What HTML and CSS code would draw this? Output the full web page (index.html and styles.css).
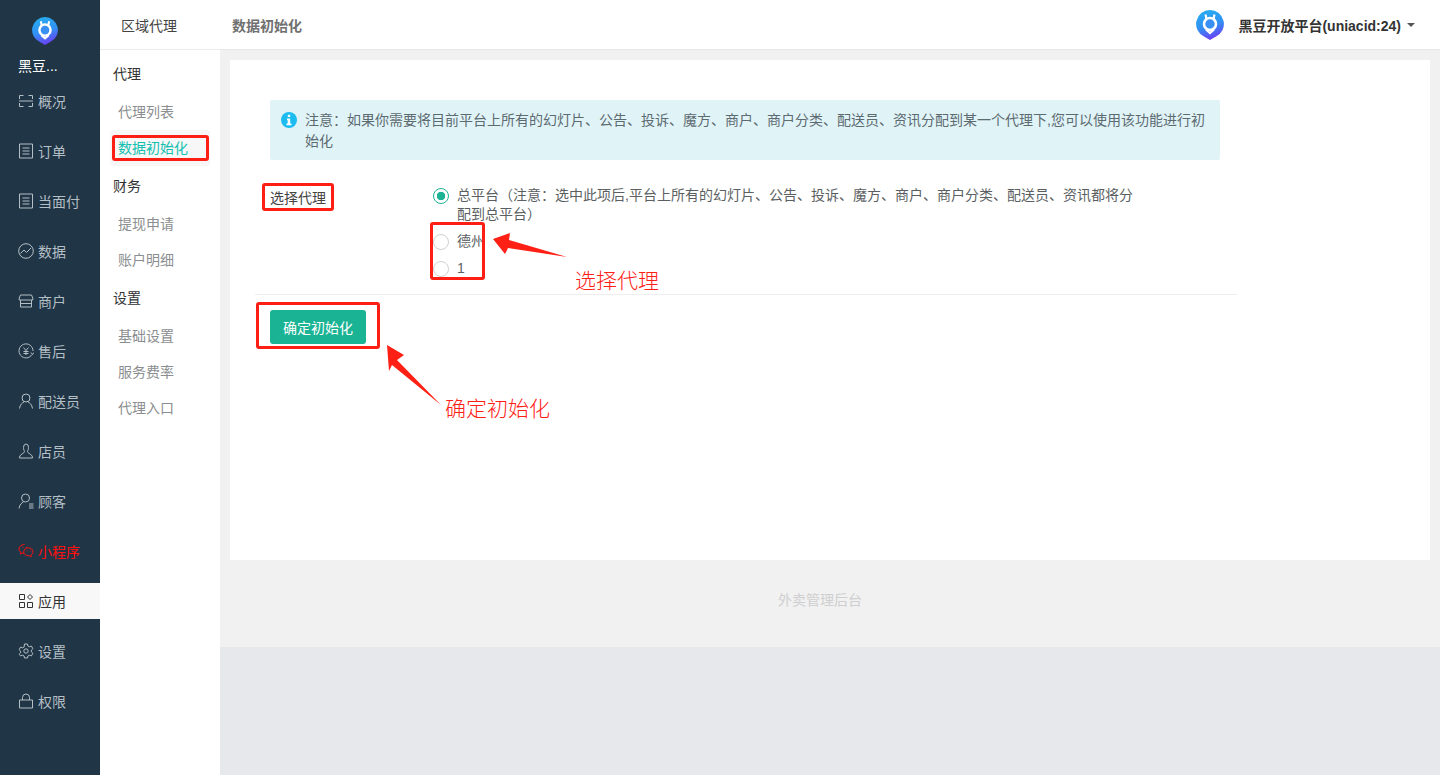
FILE: index.html
```html
<!DOCTYPE html>
<html lang="zh-CN">
<head>
<meta charset="utf-8">
<title>数据初始化</title>
<link rel="stylesheet" href="styles.css">
</head>
<body>
<svg class="defs" width="0" height="0" aria-hidden="true">
  <defs>
    <linearGradient id="lg" x1="0.2" y1="0" x2="0.5" y2="1">
      <stop offset="0" stop-color="#25aef0"/>
      <stop offset="0.55" stop-color="#3290f3"/>
      <stop offset="1" stop-color="#6a3ff5"/>
    </linearGradient>
    <symbol id="logo" viewBox="0 0 28 30">
      <path d="M14 0a14 14 0 0 1 6 26.600l-6 3.400-6-3.400A14 14 0 0 1 14 0z" fill="url(#lg)"/>
      <circle cx="14" cy="14" r="6" fill="#3a8ff2" stroke="#fff" stroke-width="2.600"/>
      <path d="M9.500 4.500l1 4.500M18.500 4.500l-1 4.500M10 19.500l4 3.500 4-3.500" fill="none" stroke="#fff" stroke-width="2.200"/>
    </symbol>
  </defs>
</svg>
<div class="app">
  <aside class="side">
    <div class="side-logo"><svg class="logo-sm"><use href="#logo"/></svg></div>
    <div class="side-name">黑豆...</div>
    <nav class="side-nav">
      <a class="side-item"><svg class="ic" viewBox="0 0 16 16"><path d="M1.500 6V2.500h4M10.500 2.500h4V6M14.500 10v3.500h-4M5.500 13.500h-4V10M1 8h14"/></svg>概况</a>
      <a class="side-item"><svg class="ic" viewBox="0 0 16 16"><path d="M1.500 1h13v14h-13zM4.500 5h7M4.500 8h7M4.500 11h7"/></svg>订单</a>
      <a class="side-item"><svg class="ic" viewBox="0 0 16 16"><path d="M1.500 1h13v14h-13zM4.500 5h7M4.500 8h7M4.500 11h7"/></svg>当面付</a>
      <a class="side-item"><svg class="ic" viewBox="0 0 16 16"><circle cx="8" cy="8" r="7.300"/><path d="M2.500 10.500L6 7l2.500 2.500L13 5"/></svg>数据</a>
      <a class="side-item"><svg class="ic" viewBox="0 0 16 16"><path d="M2.500 2h11l1.300 3v2H1.200V5zM2.500 7v7h11V7M2.500 10.500h11"/></svg>商户</a>
      <a class="side-item"><svg class="ic" viewBox="0 0 16 16"><path d="M14 11.500A7 7 0 1 1 15 8"/><path d="M5.500 4.500L8 7.500l2.500-3M8 7.500V12M5.500 8.500h5M5.500 10.500h5M13 9.500l1.500 2 1.500-2"/></svg>售后</a>
      <a class="side-item"><svg class="ic" viewBox="0 0 16 16"><circle cx="8" cy="5" r="4"/><path d="M1.500 15.500C2 11.500 4.500 9.500 6 9M14.500 15.500C14 11.500 11.500 9.500 10 9"/></svg>配送员</a>
      <a class="side-item"><svg class="ic" viewBox="0 0 16 16"><path d="M5.500 4.500a2.500 3.500 0 0 1 5 0c0 2-.7 3-1 4 0 2 4.500 2.500 5 5.500v1H1.500v-1c.5-3 5-3.500 5-5.500-.3-1-1-2-1-4z"/></svg>店员</a>
      <a class="side-item"><svg class="ic" viewBox="0 0 16 16"><circle cx="7.500" cy="5" r="4"/><path d="M1 15.500C1.500 11.500 4 9.500 5.500 9M11 11h4.500M11 13h4.500M11 15h4.500"/></svg>顾客</a>
      <a class="side-item is-alert"><svg class="ic" viewBox="0 0 16 16"><path d="M6.500 1.500C3.500 1.500 1 3.500 1 6c0 1.300.7 2.500 2 3.300L2.500 11l2-1c.5.100 1 .2 1.500.2"/><path d="M11.500 12.700l1.800 1-.4-1.700c1.300-.8 2.100-2 2.100-3.200 0-2.300-2.200-4-4.700-4S5.700 6.500 5.700 8.800s2.200 4 4.800 4c.3 0 .7 0 1-.1zM4.500 4.500h.8M8 4.500h.8M8.500 8h.8M12 8h.8"/></svg>小程序</a>
      <a class="side-item is-active"><svg class="ic" viewBox="0 0 16 16"><path d="M1.500 1.500h5v5h-5zM1.500 9.500h5v5h-5zM9.500 9.500h5v5h-5zM12 1.500L14.500 4 12 6.500 9.500 4z"/></svg>应用</a>
      <a class="side-item"><svg class="ic" viewBox="0 0 16 16"><circle cx="8" cy="8" r="2.200"/><path d="M6.500 1h3l.4 2 1.500.8 2-.7 1.500 2.600-1.500 1.400v1.800l1.500 1.400-1.500 2.600-2-.7-1.500.8-.4 2h-3l-.4-2-1.500-.8-2 .7L1.100 11.300l1.500-1.400V8.100L1.100 6.700l1.500-2.600 2 .7 1.500-.8z"/></svg>设置</a>
      <a class="side-item"><svg class="ic" viewBox="0 0 16 16"><path d="M1.500 7h13v8h-13zM4.500 7V4.500a3.500 3.500 0 0 1 7 0V7"/></svg>权限</a>
    </nav>
  </aside>

  <aside class="sub">
    <div class="sub-head">区域代理</div>
    <div class="sub-body">
      <div class="sub-title">代理</div>
      <a class="sub-item">代理列表</a>
      <a class="sub-item is-active">数据初始化</a>
      <div class="sub-title">财务</div>
      <a class="sub-item">提现申请</a>
      <a class="sub-item">账户明细</a>
      <div class="sub-title">设置</div>
      <a class="sub-item">基础设置</a>
      <a class="sub-item">服务费率</a>
      <a class="sub-item">代理入口</a>
    </div>
  </aside>

  <main class="main">
    <header class="top">
      <div class="top-title">数据初始化</div>
      <div class="top-user">
        <svg class="logo-top"><use href="#logo"/></svg>
        <span class="top-name">黑豆开放平台(uniacid:24)</span>
        <span class="caret"></span>
      </div>
    </header>
    <div class="content">
      <section class="panel">
        <div class="alert">
          <svg class="alert-ic" viewBox="0 0 16 16"><circle cx="8" cy="8" r="8" fill="#1cbcf0"/><path d="M6.800 2.800h2.400v2.200H6.800zM6 6.500h3.200v5H10.500v1.800h-5v-1.800h1.200V8.300H6z" fill="#fff"/></svg>
          <p>注意：如果你需要将目前平台上所有的幻灯片、公告、投诉、魔方、商户、商户分类、配送员、资讯分配到某一个代理下,您可以使用该功能进行初始化</p>
        </div>
        <div class="form-row">
          <div class="form-label">选择代理</div>
          <div class="form-ctl">
            <label class="radio is-checked"><span class="dot"></span><span class="radio-text">总平台（注意：选中此项后,平台上所有的幻灯片、公告、投诉、魔方、商户、商户分类、配送员、资讯都将分配到总平台）</span></label>
            <label class="radio"><span class="dot"></span><span class="radio-text">德州</span></label>
            <label class="radio"><span class="dot"></span><span class="radio-text">1</span></label>
          </div>
        </div>
        <div class="rule"></div>
        <button class="btn" type="button">确定初始化</button>
      </section>
      <footer class="foot">外卖管理后台</footer>
    </div>
  </main>
</div>

<div class="mark mark-sub"></div>
<div class="mark mark-label"></div>
<div class="mark mark-radio"></div>
<div class="mark mark-btn"></div>
<svg class="arrows" width="1440" height="775" viewBox="0 0 1440 775" aria-hidden="true">
  <path d="M493 239L510 233 509 240 567 257 508 248 505 254z" fill="#ff2015"/>
  <path d="M387 345L404 355 397 360 441 405 392 365 389 371z" fill="#ff2015"/>
</svg>
<div class="note note-a">选择代理</div>
<div class="note note-b">确定初始化</div>
</body>
</html>
```
FILE: styles.css
```css
* { box-sizing: border-box; }
html, body { margin: 0; height: 100%; }
body {
  font-family: "Liberation Sans", "Noto Sans CJK SC", sans-serif;
  font-size: 14px;
  color: #676a6c;
  overflow: hidden;
  background: #e7e8ec;
}
.defs { position: absolute; }
.app { display: flex; height: 775px; }

.side { width: 100px; background: #203545; flex: none; color: #b4bfc6; }
.side-logo { height: 47px; padding: 17px 0 0 32px; display: flex; }
.logo-sm { width: 26px; height: 28px; }
.side-name { height: 36px; padding: 9px 0 0 18px; color: #fff; font-size: 14px; line-height: 20px; }
.side-nav { display: flex; flex-direction: column; gap: 14px; }
.side-item { height: 36px; display: flex; align-items: center; padding-left: 18px; gap: 4px; }
.ic { width: 16px; height: 16px; fill: none; stroke: currentColor; stroke-width: 1; flex: none; }
.side-item.is-alert { color: #ff1010; }
.side-item.is-active { background: #f8f8f8; color: #333; }

.sub { width: 120px; background: #fff; flex: none; }
.sub-head { height: 50px; line-height: 52px; padding-left: 21px; color: #444; border-bottom: 1px solid #ececec; }
.sub-body { padding: 4px 10px 0; }
.sub-title { height: 40px; line-height: 40px; padding-left: 3px; color: #333; }
.sub-item { display: block; height: 36px; line-height: 36px; padding-left: 8px; color: #8b8e90; }
.sub-item.is-active { background: #f7f7f7; color: #14c0b0; border-radius: 3px; }

.main { flex: 1; min-width: 0; display: flex; flex-direction: column; }
.top { height: 50px; background: #fff; border-bottom: 1px solid #e7e7e7; display: flex; align-items: center; justify-content: space-between; padding: 0 25px 0 12px; flex: none; }
.top-title { font-weight: 700; color: #707070; }
.top-user { display: flex; align-items: center; }
.logo-top { width: 28px; height: 30px; margin-right: 14px; }
.top-name { font-weight: 700; color: #333; }
.caret { width: 0; height: 0; margin-left: 6px; border-style: solid; border-width: 4px 4px 0; border-color: #555 transparent transparent; }

.content { background: #f1f1f2; height: 597px; padding: 10px 10px 0; flex: none; }
.panel { height: 500px; background: #fff; padding: 40px 40px 0; position: relative; }
.alert { width: 950px; height: 60px; background: #e0f4f8; border-radius: 2px; padding: 10px 15px 0 11px; display: flex; gap: 8px; color: #5d6a70; line-height: 21px; }
.alert p { margin: 0; }
.alert-ic { width: 16px; height: 16px; flex: none; margin-top: 2px; }

.form-row { display: flex; margin-top: 19px; }
.form-label { width: 160px; padding-top: 10px; color: #444; line-height: 18px; }
.form-ctl { width: 704px; padding-top: 7px; }
.radio { display: flex; margin-bottom: 8px; }
.dot { width: 16px; height: 16px; margin: 2px 8px 0 3px; flex: none; border-radius: 50%; border: 1px solid #d0d0d0; background: #fff; }
.radio.is-checked .dot { border-color: #1ab394; background: radial-gradient(circle, #1ab394 0 4px, #fff 4.500px); }
.radio-text { line-height: 19px; flex: 1; color: #5b5f62; }
.rule { width: 982px; margin: 8px 0 15px -15px; border-top: 1px solid #eeeeee; }
.btn { display: block; width: 96px; height: 34px; border: 0; border-radius: 3px; background: #1ab394; color: #fff; font: inherit; padding: 0; }

.foot { height: 87px; line-height: 80px; text-align: center; color: #cfcfcf; margin: 0 10px 0 -10px; }

.mark { position: absolute; border: 3px solid #ff1e14; border-radius: 3px; }
.mark-sub { left: 112px; top: 135px; width: 97px; height: 26px; }
.mark-label { left: 262px; top: 183px; width: 72px; height: 28px; }
.mark-radio { left: 430px; top: 222px; width: 55px; height: 58px; }
.mark-btn { left: 256px; top: 302px; width: 124px; height: 47px; }
.arrows { position: absolute; left: 0; top: 0; pointer-events: none; }
.note { position: absolute; color: #ff2015; font-size: 21px; line-height: 28px; font-family: "Noto Sans CJK SC", sans-serif; font-weight: 300; }
.note-a { left: 575px; top: 265px; }
.note-b { left: 445px; top: 393px; }
```
